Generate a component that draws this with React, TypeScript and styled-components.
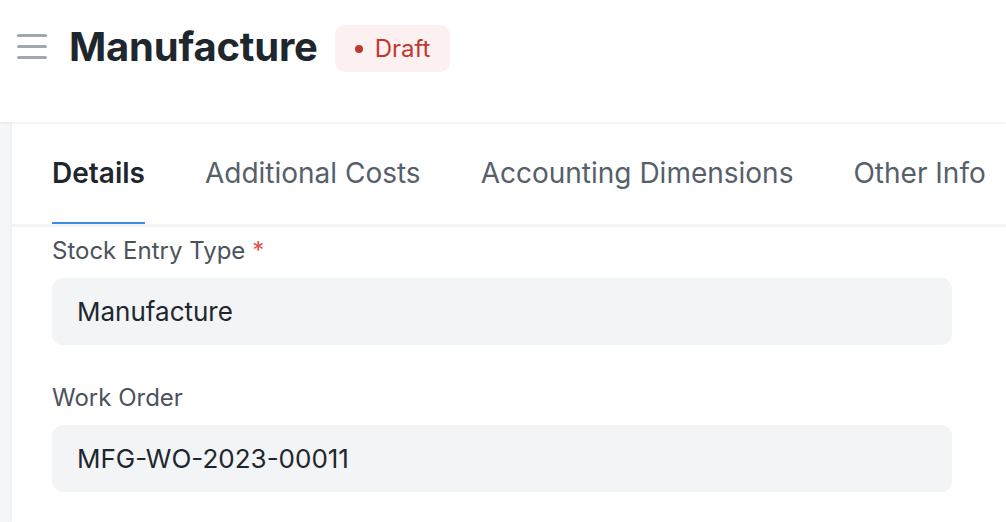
import React from "react";
import styled, { createGlobalStyle } from "styled-components";

const Global = createGlobalStyle`
  html, body { margin: 0; padding: 0; }
  body {
    font-family: Inter, "Noto Sans", sans-serif;
    background: #f5f6f7;
    width: 1006px;
    height: 522px;
    overflow: hidden;
  }
  * { box-sizing: border-box; }
`;

const Header = styled.header`
  position: relative;
  z-index: 1;
  height: 122px;
  background: #ffffff;
  box-shadow: 0 1px 3px rgba(0, 0, 0, 0.08);
  display: flex;
  align-items: flex-start;
  padding: 25px 0 0 17px;
`;

const TitleRow = styled.div`
  display: flex;
  align-items: center;
  height: 47px;
`;

const Menu = styled.button`
  border: none;
  background: none;
  padding: 0;
  width: 30px;
  height: 25px;
  display: flex;
  flex-direction: column;
  justify-content: space-between;
  margin-right: 22px;
  margin-top: -4px;
  span {
    display: block;
    height: 3px;
    border-radius: 2px;
    background: #a0a7ae;
  }
`;

const Title = styled.h1`
  margin: 0;
  font-size: 40px;
  font-weight: 700;
  color: #1f272e;
  letter-spacing: -0.2px;
  margin-top: -4px;
`;

const Badge = styled.div`
  margin-left: 17px;
  height: 47px;
  padding: 0 20px;
  border-radius: 10px;
  background: #fcf0f0;
  color: #c0392f;
  font-size: 24px;
  display: flex;
  align-items: center;
  gap: 12px;
  &::before {
    content: "";
    width: 8px;
    height: 8px;
    border-radius: 50%;
    background: #c0392f;
  }
`;

const Main = styled.main`
  display: flex;
  padding-left: 12px;
`;

const Card = styled.section`
  flex: 1;
  background: #ffffff;
  height: 400px;
  box-shadow: -1px 0 2px rgba(0, 0, 0, 0.04);
`;

const Tabs = styled.nav`
  display: flex;
  gap: 60px;
  padding-left: 40px;
  border-bottom: 3px solid #f3f4f6;
  white-space: nowrap;
`;

const Tab = styled.div<{ $active?: boolean }>`
  height: 102px;
  display: flex;
  align-items: center;
  font-size: 28px;
  font-weight: ${(p) => (p.$active ? 600 : 400)};
  color: ${(p) => (p.$active ? "#1f272e" : "#56606b")};
  border-bottom: 2px solid ${(p) => (p.$active ? "#3b8ae6" : "transparent")};
  padding-top: 2px;
`;

const Fields = styled.div`
  padding: 9px 54px 0 40px;
  display: flex;
  flex-direction: column;
  gap: 38px;
`;

const Field = styled.div`
  display: flex;
  flex-direction: column;
  gap: 12px;
`;

const Label = styled.label`
  font-size: 24px;
  line-height: 30px;
  color: #4b535b;
  span {
    color: #e2514a;
    margin-left: 7px;
  }
`;

const Input = styled.div`
  height: 67px;
  border-radius: 11px;
  background: #f3f4f6;
  display: flex;
  align-items: center;
  padding: 0 25px;
  font-size: 26px;
  color: #1f272e;
`;

export default function App() {
  return (
    <>
      <Global />
      <Header>
        <TitleRow>
          <Menu aria-label="menu">
            <span />
            <span />
            <span />
          </Menu>
          <Title>Manufacture</Title>
          <Badge>Draft</Badge>
        </TitleRow>
      </Header>
      <Main>
        <Card>
          <Tabs>
            <Tab $active>Details</Tab>
            <Tab>Additional Costs</Tab>
            <Tab>Accounting Dimensions</Tab>
            <Tab>Other Info</Tab>
          </Tabs>
          <Fields>
            <Field>
              <Label>
                Stock Entry Type<span>*</span>
              </Label>
              <Input>Manufacture</Input>
            </Field>
            <Field>
              <Label>Work Order</Label>
              <Input>MFG-WO-2023-00011</Input>
            </Field>
          </Fields>
        </Card>
      </Main>
    </>
  );
}
